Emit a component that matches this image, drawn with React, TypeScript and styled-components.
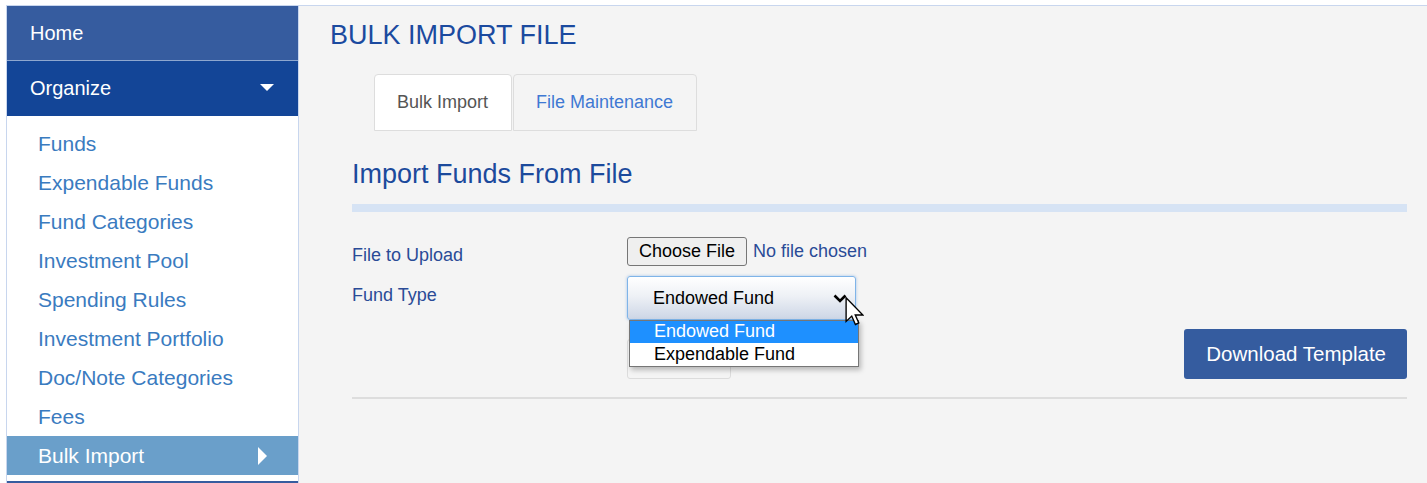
import React from 'react';
import styled, { createGlobalStyle } from 'styled-components';

const GlobalStyle = createGlobalStyle`
  html, body {
    margin: 0;
    padding: 0;
    background: #ffffff;
    font-family: "Liberation Sans", Arial, sans-serif;
  }
`;

const Page = styled.div`
  display: flex;
  margin: 5px 0 0 6px;
  border-top: 1px solid #c8d6ee;
  height: 477px;
  overflow: hidden;
`;

const Sidebar = styled.nav`
  width: 293px;
  flex-shrink: 0;
  box-sizing: border-box;
  background: #ffffff;
  border-left: 1px solid #c8d6ee;
  border-right: 1px solid #c8d6ee;
`;

const NavHeader = styled.div<{ $tone: 'light' | 'dark' }>`
  display: flex;
  align-items: center;
  justify-content: space-between;
  height: 55px;
  box-sizing: border-box;
  padding: 0 24px 0 23px;
  color: #ffffff;
  font-size: 20px;
  background: ${(p) => (p.$tone === 'light' ? '#365c9f' : '#134597')};
  border-bottom: 1px solid ${(p) => (p.$tone === 'light' ? '#8ea7cf' : '#134597')};
`;

const NavList = styled.ul`
  list-style: none;
  margin: 0;
  padding: 8px 0 6px;
`;

const NavItem = styled.li<{ $active?: boolean }>`
  display: flex;
  align-items: center;
  justify-content: space-between;
  height: 39px;
  padding: 0 31px 0 31px;
  font-size: 21px;
  color: ${(p) => (p.$active ? '#ffffff' : '#3a7bbf')};
  background: ${(p) => (p.$active ? '#6a9fca' : 'transparent')};
`;

const Main = styled.main`
  flex: 1;
  background: #f4f4f4;
  padding: 14px 20px 0 31px;
`;

const Title = styled.h1`
  margin: 0;
  font-size: 27px;
  line-height: 30px;
  font-weight: normal;
  color: #1b4a9f;
`;

const Tabs = styled.div`
  display: flex;
  margin: 24px 0 0 44px;
`;

const Tab = styled.div<{ $active?: boolean }>`
  display: flex;
  align-items: center;
  height: 57px;
  box-sizing: border-box;
  padding: 0 23px 0 22px;
  font-size: 18px;
  border: 1px solid #dddddd;
  border-radius: 4px 4px 0 0;
  margin-right: 1px;
  background: ${(p) => (p.$active ? '#ffffff' : '#f4f4f4')};
  color: ${(p) => (p.$active ? '#555555' : '#3f79d3')};
`;

const Section = styled.section`
  margin-left: 22px;
`;

const SubTitle = styled.h2`
  margin: 28px 0 0;
  font-size: 27px;
  line-height: 30px;
  font-weight: normal;
  color: #1c4a9c;
`;

const Bar = styled.div`
  height: 8px;
  margin-top: 15px;
  background: #d6e3f4;
`;

const FormGrid = styled.div`
  display: grid;
  grid-template-columns: 275px 1fr;
  row-gap: 11px;
  margin-top: 24px;
  font-size: 18px;
  color: #2a4b97;
`;

const Label = styled.div<{ $offset: number }>`
  padding-top: ${(p) => p.$offset}px;
`;

const FileRow = styled.div`
  display: flex;
  align-items: center;
  gap: 6px;
`;

const FileButton = styled.button`
  height: 29px;
  padding: 0 11px;
  font-family: inherit;
  font-size: 18px;
  color: #000000;
  background: #efefef;
  border: 1px solid #767676;
  border-radius: 3px;
`;

const SelectWrap = styled.div`
  position: relative;
  width: 229px;
  margin-top: -1px;
`;

const SelectBox = styled.div`
  display: flex;
  align-items: center;
  justify-content: space-between;
  height: 44px;
  box-sizing: border-box;
  padding: 0 8px 0 25px;
  color: #000000;
  border: 1px solid #7fb4e8;
  border-radius: 3px;
  background: linear-gradient(#ffffff 0%, #eef1f6 45%, #cdd6e6 100%);
  box-shadow: 0 0 3px rgba(90, 150, 220, 0.55);
`;

const OptionList = styled.div`
  position: absolute;
  top: 100%;
  left: 2px;
  width: 228px;
  z-index: 2;
  background: #ffffff;
  border: 1px solid #767676;
  box-shadow: 2px 3px 5px rgba(0, 0, 0, 0.25);
`;

const Option = styled.div<{ $selected?: boolean }>`
  height: 22px;
  line-height: 21px;
  padding-left: 24px;
  font-size: 18px;
  color: ${(p) => (p.$selected ? '#ffffff' : '#000000')};
  background: ${(p) => (p.$selected ? '#1e90ff' : 'transparent')};
  & + & {
    height: 23px;
    line-height: 23px;
  }
`;

const Cursor = styled.svg`
  position: absolute;
  left: 218px;
  top: 21px;
  z-index: 3;
`;

const ActionRow = styled.div`
  grid-column: 1 / -1;
  display: flex;
  justify-content: space-between;
  align-items: flex-end;
  padding-left: 275px;
  margin-top: -2px;
`;

const UploadButton = styled.button`
  width: 104px;
  height: 40px;
  background: #f4f4f4;
  border: 1px solid #dcdcdc;
  border-radius: 3px;
`;

const PrimaryButton = styled.button`
  height: 50px;
  padding: 0 21px 0 22px;
  font-family: inherit;
  font-size: 20.5px;
  color: #ffffff;
  background: #355c9f;
  border: none;
  border-radius: 3px;
`;

const Rule = styled.hr`
  margin: 18px 0 0;
  border: none;
  border-top: 2px solid #dddddd;
`;

const sideLinks = [
  'Funds',
  'Expendable Funds',
  'Fund Categories',
  'Investment Pool',
  'Spending Rules',
  'Investment Portfolio',
  'Doc/Note Categories',
  'Fees',
];

export default function App() {
  return (
    <>
      <GlobalStyle />
      <Page>
        <Sidebar>
          <NavHeader $tone="light">Home</NavHeader>
          <NavHeader $tone="dark">
            Organize
            <svg width="14" height="8" viewBox="0 0 14 8">
              <polygon points="0,0 14,0 7,7" fill="#ffffff" />
            </svg>
          </NavHeader>
          <NavList>
            {sideLinks.map((l) => (
              <NavItem key={l}>{l}</NavItem>
            ))}
            <NavItem $active>
              Bulk Import
              <svg width="9" height="18" viewBox="0 0 9 18">
                <polygon points="0,0 9,9 0,18" fill="#ffffff" />
              </svg>
            </NavItem>
          </NavList>
          <NavHeader $tone="light" />
        </Sidebar>

        <Main>
          <Title>BULK IMPORT FILE</Title>
          <Tabs>
            <Tab $active>Bulk Import</Tab>
            <Tab>File Maintenance</Tab>
          </Tabs>

          <Section>
            <SubTitle>Import Funds From File</SubTitle>
            <Bar />
            <FormGrid>
              <Label $offset={9}>File to Upload</Label>
              <FileRow>
                <FileButton>Choose File</FileButton>
                <span>No file chosen</span>
              </FileRow>

              <Label $offset={8}>Fund Type</Label>
              <SelectWrap>
                <SelectBox>
                  Endowed Fund
                  <svg width="14" height="9" viewBox="0 0 14 9">
                    <polyline points="1.5,1.5 7,7 12.5,1.5" fill="none" stroke="#000" strokeWidth="2.6" />
                  </svg>
                </SelectBox>
                <OptionList>
                  <Option $selected>Endowed Fund</Option>
                  <Option>Expendable Fund</Option>
                </OptionList>
                <Cursor width="19" height="29" viewBox="0 0 12 19">
                  <path
                    d="M0.5 0.5 L0.5 16 L4.2 12.5 L6.6 18 L8.8 17 L6.5 11.8 L11.5 11.8 Z"
                    fill="#ffffff"
                    stroke="#000000"
                    strokeWidth="0.9"
                    strokeLinejoin="miter"
                  />
                </Cursor>
              </SelectWrap>

              <ActionRow>
                <UploadButton aria-label="Upload" />
                <PrimaryButton>Download Template</PrimaryButton>
              </ActionRow>
            </FormGrid>
            <Rule />
          </Section>
        </Main>
      </Page>
    </>
  );
}
